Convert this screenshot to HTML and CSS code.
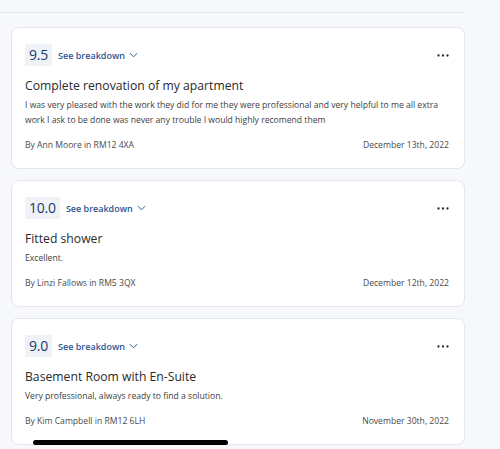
FILE: index.html
```html
<!DOCTYPE html>
<html lang="en">
<head>
<meta charset="utf-8">
<title>Reviews</title>
<link rel="stylesheet" href="styles.css">
</head>
<body>
<div class="page">
  <div class="divider"></div>
  <div class="list">
    <article class="card">
      <div class="head">
        <div class="score">9.5</div>
        <button class="breakdown">See breakdown <svg class="chev" viewBox="0 0 10 6" width="9" height="6"><path d="M1 1l4 4 4-4" fill="none" stroke="currentColor" stroke-width="1.1"/></svg></button>
        <svg class="more" viewBox="0 0 12 3" width="12" height="3"><circle cx="1.5" cy="1.5" r="1.15"/><circle cx="6" cy="1.5" r="1.15"/><circle cx="10.5" cy="1.5" r="1.15"/></svg>
      </div>
      <h2 class="title">Complete renovation of my apartment</h2>
      <p class="body">I was very pleased with the work they did for me they were professional and very helpful to me all extra work I ask to be done was never any trouble I would highly recomend them</p>
      <div class="foot"><span>By Ann Moore in RM12 4XA</span><span>December 13th, 2022</span></div>
    </article>
    <article class="card">
      <div class="head">
        <div class="score">10.0</div>
        <button class="breakdown">See breakdown <svg class="chev" viewBox="0 0 10 6" width="9" height="6"><path d="M1 1l4 4 4-4" fill="none" stroke="currentColor" stroke-width="1.1"/></svg></button>
        <svg class="more" viewBox="0 0 12 3" width="12" height="3"><circle cx="1.5" cy="1.5" r="1.15"/><circle cx="6" cy="1.5" r="1.15"/><circle cx="10.5" cy="1.5" r="1.15"/></svg>
      </div>
      <h2 class="title">Fitted shower</h2>
      <p class="body">Excellent.</p>
      <div class="foot"><span>By Linzi Fallows in RM5 3QX</span><span>December 12th, 2022</span></div>
    </article>
    <article class="card">
      <div class="head">
        <div class="score">9.0</div>
        <button class="breakdown">See breakdown <svg class="chev" viewBox="0 0 10 6" width="9" height="6"><path d="M1 1l4 4 4-4" fill="none" stroke="currentColor" stroke-width="1.1"/></svg></button>
        <svg class="more" viewBox="0 0 12 3" width="12" height="3"><circle cx="1.5" cy="1.5" r="1.15"/><circle cx="6" cy="1.5" r="1.15"/><circle cx="10.5" cy="1.5" r="1.15"/></svg>
      </div>
      <h2 class="title">Basement Room with En-Suite</h2>
      <p class="body">Very professional, always ready to find a solution.</p>
      <div class="foot"><span>By Kim Campbell in RM12 6LH</span><span>November 30th, 2022</span></div>
    </article>
  </div>
  <div class="home-indicator"></div>
</div>
</body>
</html>
```

FILE: styles.css
```css
* { box-sizing: border-box; }
html, body {
  margin: 0;
  padding: 0;
  background: #f7f8fc;
  font-family: "Open Sans", "Noto Sans", sans-serif;
  color: #333;
}
.page {
  position: relative;
  width: 500px;
  height: 449px;
  overflow: hidden;
  padding-top: 12px;
}
.divider {
  width: 464px;
  height: 1px;
  background: #e2e4ea;
}
.list {
  display: flex;
  flex-direction: column;
  gap: 11px;
  padding: 14px 0 0 11px;
  width: 465px;
}
.card {
  background: #fff;
  border: 1px solid #e3e6ec;
  border-radius: 8px;
  padding: 16px 15px 16px 13px;
}
.head {
  display: flex;
  align-items: center;
  height: 22px;
}
.score {
  background: #eff2f7;
  color: #1d3a66;
  font-size: 14px;
  line-height: 22px;
  height: 22px;
  padding: 0 4px;
  letter-spacing: -0.2px;
}
.breakdown {
  border: 0;
  background: none;
  padding: 0;
  margin-left: 6px;
  font-family: inherit;
  font-size: 9px;
  font-weight: 600;
  color: #2e5592;
  display: flex;
  align-items: center;
  gap: 4px;
}
.chev { display: block; }
.more {
  margin-left: auto;
  fill: #2a2a2a;
  display: block;
}
.title {
  margin: 11px 0 0;
  font-size: 12.2px;
  line-height: 18px;
  font-weight: 400;
  color: #2a2a2a;
}
.body {
  margin: 3px 0 0;
  font-size: 8.6px;
  line-height: 15px;
  color: #404040;
}
.foot {
  margin-top: 10px;
  display: flex;
  justify-content: space-between;
  font-size: 8.6px;
  line-height: 14px;
  color: #4a4a4a;
}
.home-indicator {
  position: absolute;
  left: 33px;
  top: 440px;
  width: 195px;
  height: 5px;
  border-radius: 3px;
  background: #000;
}
```
